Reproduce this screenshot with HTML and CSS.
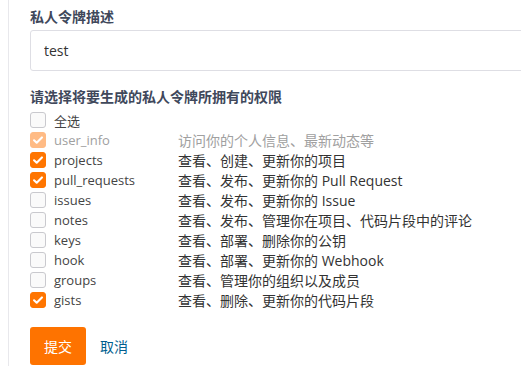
FILE: index.html
```html
<!DOCTYPE html>
<html>
<head>
  <meta charset="utf-8">
  <title>私人令牌</title>
  <link rel="stylesheet" href="styles.css">
</head>
<body>
  <div class="panel">
    <div class="field">
      <label class="field-title">私人令牌描述</label>
      <input class="text-input" type="text" value="test">
    </div>

    <div class="field">
      <div class="field-title">请选择将要生成的私人令牌所拥有的权限</div>
      <div class="scopes">
        <div class="scope">
          <span class="box"></span>
          <span class="name">全选</span>
        </div>
        <div class="scope disabled">
          <span class="box checked"><svg viewBox="0 0 16 16"><path d="M3.5 8.3l3 2.8 6-6" /></svg></span>
          <span class="name">user_info</span>
          <span class="desc">访问你的个人信息、最新动态等</span>
        </div>
        <div class="scope">
          <span class="box checked"><svg viewBox="0 0 16 16"><path d="M3.5 8.3l3 2.8 6-6" /></svg></span>
          <span class="name">projects</span>
          <span class="desc">查看、创建、更新你的项目</span>
        </div>
        <div class="scope">
          <span class="box checked"><svg viewBox="0 0 16 16"><path d="M3.5 8.3l3 2.8 6-6" /></svg></span>
          <span class="name">pull_requests</span>
          <span class="desc">查看、发布、更新你的 Pull Request</span>
        </div>
        <div class="scope">
          <span class="box"></span>
          <span class="name">issues</span>
          <span class="desc">查看、发布、更新你的 Issue</span>
        </div>
        <div class="scope">
          <span class="box"></span>
          <span class="name">notes</span>
          <span class="desc">查看、发布、管理你在项目、代码片段中的评论</span>
        </div>
        <div class="scope">
          <span class="box"></span>
          <span class="name">keys</span>
          <span class="desc">查看、部署、删除你的公钥</span>
        </div>
        <div class="scope">
          <span class="box"></span>
          <span class="name">hook</span>
          <span class="desc">查看、部署、更新你的 Webhook</span>
        </div>
        <div class="scope">
          <span class="box"></span>
          <span class="name">groups</span>
          <span class="desc">查看、管理你的组织以及成员</span>
        </div>
        <div class="scope">
          <span class="box checked"><svg viewBox="0 0 16 16"><path d="M3.5 8.3l3 2.8 6-6" /></svg></span>
          <span class="name">gists</span>
          <span class="desc">查看、删除、更新你的代码片段</span>
        </div>
      </div>
    </div>

    <div class="actions">
      <button class="btn-submit">提交</button>
      <a class="cancel" href="#">取消</a>
    </div>
  </div>
</body>
</html>
```

FILE: styles.css
```css
html, body { margin: 0; padding: 0; }

body
{
    background: #fff;
    overflow: hidden;
    font-family: "Open Sans", "Noto Sans CJK SC", sans-serif;
    font-size: 14px;
    color: #333;
}

.panel
{
    margin-left: 8px;
    height: 100vh;
    overflow: hidden;
    border-left: 1px solid #e8e8ec;
    padding: 7px 0 0 21px;
    box-sizing: border-box;
}

.field { margin-bottom: 12px; }

.field-title
{
    display: block;
    font-weight: bold;
    color: #40485b;
    line-height: 20px;
    margin-bottom: 3px;
}

/* the input runs past the right edge of the window */
.text-input
{
    display: block;
    width: calc(100% + 20px);
    height: 41px;
    box-sizing: border-box;
    border: 1px solid #dedee4;
    border-radius: 3px;
    padding: 0 13px;
    font: 14px "Open Sans", "Noto Sans CJK SC", sans-serif;
    color: #333;
    outline: none;
}

.field + .field { margin-top: 16px; }

.scopes { margin-top: 2px; }

.scope
{
    display: grid;
    grid-template-columns: 16px 116px 1fr;
    column-gap: 8px;
    align-items: center;
    height: 20px;
}

.box
{
    width: 16px;
    height: 16px;
    box-sizing: border-box;
    border: 1px solid #c9c9ce;
    border-radius: 3px;
    background: #fafafa;
}

.box.checked
{
    border-color: #ff7500;
    background: #ff7500;
}

.box svg
{
    display: block;
    width: 14px;
    height: 14px;
    fill: none;
    stroke: #fff;
    stroke-width: 2.4;
    stroke-linecap: round;
    stroke-linejoin: round;
}

.name
{
    font-size: 13px;
    color: #444;
    white-space: nowrap;
}

.desc
{
    font-size: 14px;
    color: #333;
    white-space: nowrap;
}

.disabled .box.checked
{
    border-color: #ffbb85;
    background: #ffbb85;
}

.disabled .name, .disabled .desc { color: #a0a0a0; }

.actions
{
    display: flex;
    align-items: center;
    gap: 14px;
    margin-top: 17px;
}

.btn-submit
{
    width: 56px;
    height: 38px;
    border: none;
    border-radius: 3px;
    background: #fe7300;
    color: #fff;
    font: 14px "Noto Sans CJK SC", sans-serif;
    padding: 0;
}

.cancel
{
    color: #005f8f;
    text-decoration: none;
    font-size: 14px;
}
```
